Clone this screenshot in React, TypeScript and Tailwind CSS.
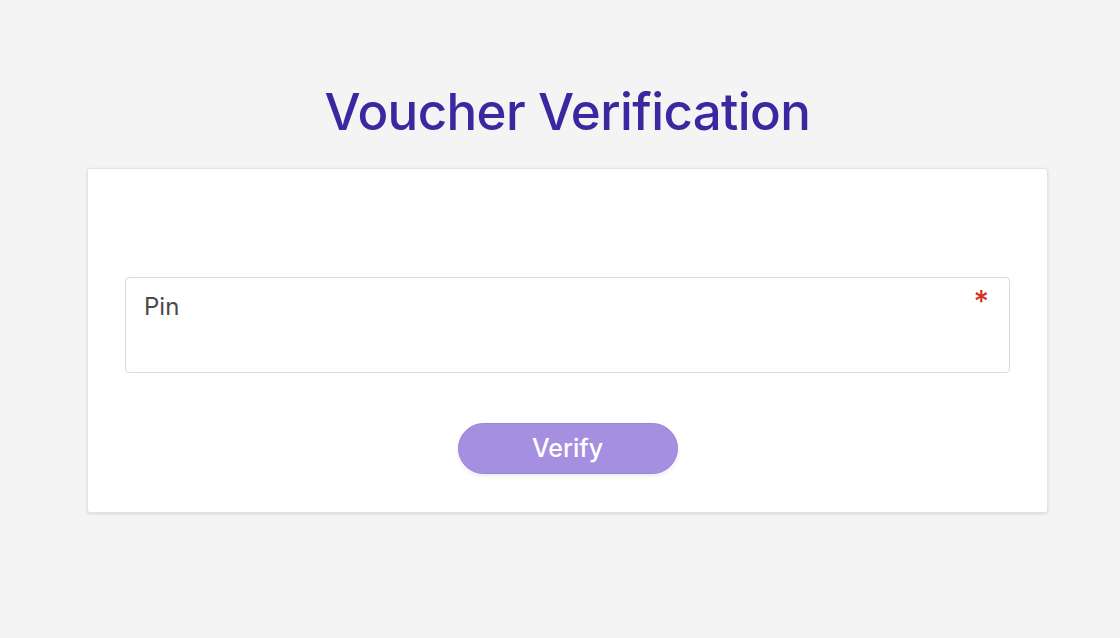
export default function App() {
  return (
    <div
      className="min-h-[638px] w-full bg-[#f4f4f4] flex flex-col items-center pl-[15px]"
      style={{ fontFamily: 'Inter, "Noto Sans", sans-serif' }}
    >
      <h1 className="mt-[80px] text-[51px] leading-[64px] font-medium text-[#3b27a0] tracking-[-0.6px]">
        Voucher Verification
      </h1>
      <div className="mt-[24px] w-[961px] h-[345px] bg-white rounded-[3px] border border-[#e4e4e4] shadow-[0_1px_3px_rgba(0,0,0,0.12)] px-[37px] pt-[108px] flex flex-col items-center">
        <div className="relative w-full h-[96px] border border-[#dcdcdc] rounded-[4px] px-[18px] pt-[14px]">
          <span className="text-[24px] leading-[30px] text-[#4a4a4a]">Pin</span>
          <span className="absolute right-[20px] top-[8px] text-[30px] leading-[30px] font-medium text-[#d3322a]">*</span>
        </div>
        <button className="mt-[50px] w-[220px] h-[51px] rounded-full bg-[#a48fe0] border border-[#9a86d8] text-white text-[25px] font-medium shadow-[0_2px_4px_rgba(0,0,0,0.08)]">
          Verify
        </button>
      </div>
    </div>
  )
}
